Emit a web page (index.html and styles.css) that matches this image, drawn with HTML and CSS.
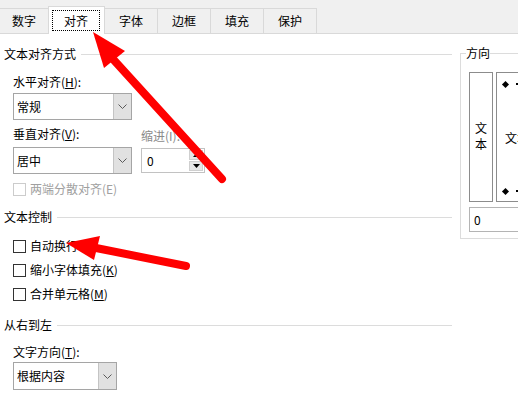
FILE: index.html
```html
<!DOCTYPE html>
<html lang="zh-CN">
<head>
    <meta charset="UTF-8">
    <title>设置单元格格式 - 对齐</title>
    <link rel="stylesheet" href="styles.css">
</head>
<body>

    <!-- 选项卡 -->
    <div class="tabs">
        <div class="tab tab-first">数字</div>
        <div class="tab active"><span class="focus">对齐</span></div>
        <div class="tab">字体</div>
        <div class="tab">边框</div>
        <div class="tab">填充</div>
        <div class="tab">保护</div>
    </div>

    <div class="content">
        <div class="left">
            <div class="heading heading-first"><span>文本对齐方式</span><i class="rule"></i></div>

            <div class="align-block">
                <div class="col-main">
                    <div class="label label-h">水平对齐(<u>H</u>):</div>
                    <div class="select select-h">
                        <span class="select-text">常规</span>
                        <span class="select-btn">
                            <svg width="9" height="5" viewBox="0 0 9 5"><polyline points="0.5,0.5 4.5,4.5 8.5,0.5" fill="none" stroke="#5a5a5a" stroke-width="1"/></svg>
                        </span>
                    </div>
                    <div class="label label-v">垂直对齐(<u>V</u>):</div>
                    <div class="select select-v">
                        <span class="select-text">居中</span>
                        <span class="select-btn">
                            <svg width="9" height="5" viewBox="0 0 9 5"><polyline points="0.5,0.5 4.5,4.5 8.5,0.5" fill="none" stroke="#5a5a5a" stroke-width="1"/></svg>
                        </span>
                    </div>
                    <label class="check disabled check-justify"><span class="box"></span><span>两端分散对齐(E)</span></label>
                </div>
                <div class="col-indent">
                    <div class="label disabled-text">缩进(I):</div>
                    <div class="spin">
                        <span class="spin-text">0</span>
                        <span class="spin-btns">
                            <span class="spin-btn"><svg width="7" height="4" viewBox="0 0 7 4"><polygon points="3.5,0 7,4 0,4" fill="#000"/></svg></span>
                            <span class="spin-btn"><svg width="7" height="4" viewBox="0 0 7 4"><polygon points="0,0 7,0 3.5,4" fill="#000"/></svg></span>
                        </span>
                    </div>
                </div>
            </div>

            <div class="heading heading-ctrl"><span>文本控制</span><i class="rule"></i></div>
            <div class="checks">
                <label class="check"><span class="box"></span><span>自动换行</span></label>
                <label class="check"><span class="box"></span><span>缩小字体填充(<u>K</u>)</span></label>
                <label class="check"><span class="box"></span><span>合并单元格(<u>M</u>)</span></label>
            </div>

            <div class="heading heading-rtl"><span>从右到左</span><i class="rule"></i></div>
            <div class="rtl-block">
                <div class="label">文字方向(<u>T</u>):</div>
                <div class="select select-dir">
                    <span class="select-text">根据内容</span>
                    <span class="select-btn">
                        <svg width="9" height="5" viewBox="0 0 9 5"><polyline points="0.5,0.5 4.5,4.5 8.5,0.5" fill="none" stroke="#5a5a5a" stroke-width="1"/></svg>
                    </span>
                </div>
            </div>
        </div>

        <!-- 方向 -->
        <fieldset class="orient">
            <legend>方向</legend>
            <div class="orient-boxes">
                <div class="vbox">
                    <span>文</span>
                    <span>本</span>
                </div>
                <div class="dial">
                    <span class="dial-mark"><i class="diamond"></i><i class="dot"></i></span>
                    <span class="dial-text">文本</span>
                    <span class="dial-mark"><i class="diamond"></i><i class="dot"></i></span>
                </div>
            </div>
            <div class="degree">0</div>
        </fieldset>
    </div>

    <!-- 红色箭头标注 -->
    <svg class="arrows" width="518" height="398" viewBox="0 0 518 398">
        <line x1="222" y1="179" x2="112" y2="58" stroke="#ff0000" stroke-width="8" stroke-linecap="round"/>
        <polygon points="93,32 104,68 125,51" fill="#ff0000"/>
        <line x1="186" y1="266" x2="96" y2="248" stroke="#ff0000" stroke-width="8" stroke-linecap="round"/>
        <polygon points="66,243 100,236 94,260" fill="#ff0000"/>
    </svg>

</body>
</html>
```

FILE: styles.css
```css
html {
    overflow: hidden;
}

body {
    margin: 0;
    padding: 0;
    width: 518px;
    height: 398px;
    position: relative;
    background-color: #fff;
    font-family: "Noto Sans CJK SC", "Liberation Sans", sans-serif;
    font-size: 12px;
    line-height: 16px;
    color: #000;
}

/* 选项卡 */
.tabs {
    display: flex;
    align-items: flex-end;
    height: 34px;
    box-sizing: border-box;
    background-color: #f0f0f0;
    border-bottom: 1px solid #d9d9d9;
}

.tab {
    box-sizing: border-box;
    width: 54px;
    height: 25px;
    margin-right: -1px;
    border: 1px solid #d9d9d9;
    border-bottom: none;
    display: flex;
    align-items: center;
    justify-content: center;
}

.tab-first {
    width: 50px;
    margin-left: -1px;
}

.tab.active {
    width: 57px;
    height: 28px;
    margin-bottom: -1px;
    padding: 3px 4px 3px 3px;
    background-color: #fff;
    position: relative;
    z-index: 1;
}

.tab .focus {
    flex: 1;
    align-self: stretch;
    border: 1px dotted #000;
    display: flex;
    align-items: center;
    justify-content: center;
}

/* 主体 */
.content {
    display: flex;
    gap: 8px;
}

.left {
    flex: 0 0 452px;
}

.heading {
    display: flex;
    align-items: center;
    gap: 5px;
    padding-left: 4px;
    height: 16px;
}

.heading .rule {
    flex: 1;
    height: 1px;
    background-color: #dcdcdc;
}

.heading-first { margin-top: 12px; }
.heading-ctrl { margin-top: 12px; }
.heading-rtl { margin-top: 15px; }

.label {
    height: 16px;
}

.disabled-text {
    color: #8a8a8a;
}

.align-block {
    display: flex;
    padding-left: 13px;
}

.col-main {
    width: 119px;
}

.label-h { margin-top: 12px; }
.label-v { margin-top: 6px; }
.select-h { margin-top: 3px; }
.select-v { margin-top: 5px; }

.col-indent {
    margin-left: 9px;
    padding-top: 66px;
}

/* 下拉框 */
.select {
    box-sizing: border-box;
    height: 27px;
    border: 1px solid #a5a5a5;
    display: flex;
    background-color: #fff;
}

.select-text {
    flex: 1;
    padding-left: 3px;
    display: flex;
    align-items: center;
}

.select-btn {
    width: 17px;
    background-color: #e1e1e1;
    border-left: 1px solid #c4c4c4;
    display: flex;
    align-items: center;
    justify-content: center;
}

.select-dir {
    width: 104px;
    height: 28px;
}

/* 微调框 */
.spin {
    box-sizing: border-box;
    width: 64px;
    height: 25px;
    margin-top: 4px;
    border: 1px solid #c2c2c2;
    display: flex;
    padding: 1px;
}

.spin-text {
    flex: 1;
    padding-left: 4px;
    display: flex;
    align-items: center;
}

.spin-btns {
    width: 14px;
    display: flex;
    flex-direction: column;
    gap: 1px;
}

.spin-btn {
    flex: 1;
    background-color: #e6e6e6;
    border: 1px solid #cfcfcf;
    display: flex;
    align-items: center;
    justify-content: center;
}

/* 复选框 */
.check {
    display: flex;
    align-items: center;
    height: 16px;
    gap: 4px;
}

.check .box {
    box-sizing: border-box;
    width: 13px;
    height: 13px;
    border: 1px solid #333;
    background-color: #fff;
}

.check.disabled {
    color: #a0a0a0;
}

.check.disabled .box {
    border-color: #cccccc;
}

.check-justify {
    margin-top: 7px;
}

.checks {
    padding-left: 13px;
    margin-top: 13px;
    display: flex;
    flex-direction: column;
    gap: 8px;
}

.rtl-block {
    padding-left: 13px;
    margin-top: 11px;
}

.rtl-block .select {
    margin-top: 2px;
}

/* 方向 */
.orient {
    flex: 0 0 120px;
    box-sizing: border-box;
    margin: 11px 0 0 0;
    padding: 0 8px 6px 8px;
    border: 1px solid #dcdcdc;
    align-self: flex-start;
}

.orient legend {
    padding: 0;
    margin-left: -3px;
    line-height: 16px;
}

.orient-boxes {
    display: flex;
    gap: 3px;
    margin-top: 11px;
}

.vbox {
    box-sizing: border-box;
    width: 24px;
    height: 130px;
    border: 1px solid #8c8c8c;
    display: flex;
    flex-direction: column;
    align-items: center;
    justify-content: center;
    padding-bottom: 2px;
}

.dial {
    box-sizing: border-box;
    width: 80px;
    height: 130px;
    border: 1px solid #8c8c8c;
    display: flex;
    flex-direction: column;
    justify-content: space-between;
    padding: 8px 0 7px 6px;
}

.dial-mark {
    display: flex;
    align-items: center;
    gap: 8px;
    height: 6px;
}

.diamond {
    width: 5px;
    height: 5px;
    background-color: #000;
    transform: rotate(45deg);
}

.dot {
    width: 2px;
    height: 2px;
    background-color: #000;
}

.dial-text {
    padding-left: 2px;
}

.degree {
    box-sizing: border-box;
    width: 90px;
    height: 25px;
    margin-top: 5px;
    border: 1px solid #b4b4b4;
    padding-left: 4px;
    display: flex;
    align-items: center;
}

/* 红色箭头 */
.arrows {
    position: absolute;
    left: 0;
    top: 0;
    pointer-events: none;
    z-index: 5;
}
```
